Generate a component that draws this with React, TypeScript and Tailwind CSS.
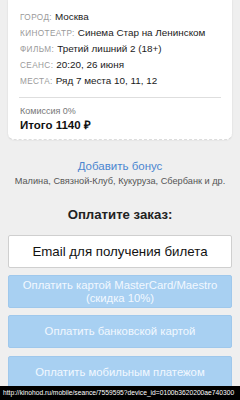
import React from "react";

const rows: [string, string][] = [
  ["ГОРОД:", "Москва"],
  ["КИНОТЕАТР:", "Синема Стар на Ленинском"],
  ["ФИЛЬМ:", "Третий лишний 2 (18+)"],
  ["СЕАНС:", "20:20, 26 июня"],
  ["МЕСТА:", "Ряд 7 места 10, 11, 12"],
];

export default function App() {
  return (
    <div
      className="relative w-[240px] h-[400px] overflow-hidden bg-[#efefef]"
      style={{ fontFamily: '"Liberation Sans", Arial, sans-serif' }}
    >
      <div className="px-[8px]">
        <div className="relative bg-white rounded-b-[6px] shadow-[0_0_2px_rgba(0,0,0,0.12)] px-[12px] pt-[11px] pb-[7px] border-b border-dashed border-[#dcdcdc]">
          <div className="flex flex-col gap-[4px]">
            {rows.map(([l, v]) => (
              <div key={l} className="flex items-baseline h-[12px] leading-[12px]">
                <span className="text-[8.2px] tracking-[0.4px] text-[#9a9a9a] mr-[3px]">{l}</span>
                <span className="text-[9.9px] text-[#1a1a1a]">{v}</span>
              </div>
            ))}
          </div>
          <div className="h-px bg-[#dedede] mt-[10px] mb-[8px] -mx-[1px]" />
          <div className="text-[9px] text-[#777] leading-[11px]">Комиссия 0%</div>
          <div className="text-[11.5px] font-bold text-[#111] leading-[14px] mt-[1px]">Итого 1140 ₽</div>
        </div>
      </div>

      <div className="flex flex-col items-center mt-[19px]">
        <div className="text-[11.5px] text-[#4b86cf] leading-[14px]">Добавить бонус</div>
        <div className="text-[9.2px] text-[#555] leading-[11px] mt-[3px]">
          Малина, Связной-Клуб, Кукуруза, Сбербанк и др.
        </div>
        <div className="text-[13.2px] font-bold text-[#222] leading-[16px] mt-[20px]">Оплатите заказ:</div>
      </div>

      <div className="px-[8px] mt-[12px] flex flex-col gap-[7px]">
        <div className="h-[33px] bg-white border border-[#cfcfcf] rounded-[2px] flex items-center justify-center text-[13.3px] text-[#111]">
          Email для получения билета
        </div>
        <div className="h-[33px] bg-[#a8d0f2] border border-[#9fc8ec] rounded-[2px] flex flex-col items-center justify-center text-[11.3px] text-[#f2f8ff] leading-[13px]">
          <span>Оплатить картой MasterCard/Maestro</span>
          <span>(скидка 10%)</span>
        </div>
        <div className="h-[33px] bg-[#a8d0f2] border border-[#9fc8ec] rounded-[2px] flex items-center justify-center text-[11.3px] text-[#f2f8ff]">
          Оплатить банковской картой
        </div>
        <div className="h-[33px] bg-[#a8d0f2] border border-[#9fc8ec] rounded-[2px] flex items-center justify-center text-[11.3px] text-[#f2f8ff] mt-[1px]">
          Оплатить мобильным платежом
        </div>
      </div>

      <div className="absolute left-0 right-0 bottom-0 h-[14px] bg-black flex items-center pl-[3px] text-[6.7px] text-white whitespace-nowrap overflow-hidden">
        http://kinohod.ru/mobile/seance/7559595?device_id=0100b3620200ae740300
      </div>
    </div>
  );
}
